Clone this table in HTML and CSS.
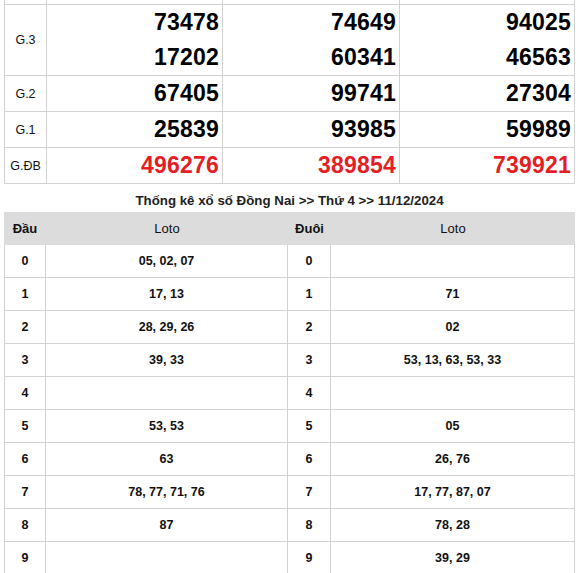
FILE: index.html
```html
<!DOCTYPE html>
<html lang="vi">
<head>
<meta charset="utf-8">
<title>XSDN 11/12/2024</title>
<link rel="stylesheet" href="styles.css">
</head>
<body>
<div class="page">
  <div class="prizes">
    <div class="cell lbl cut"></div><div class="cell cut"></div><div class="cell cut"></div><div class="cell cut"></div>

    <div class="cell lbl g3">G.3</div>
    <div class="cell num g3"><span>73478</span><span>17202</span></div>
    <div class="cell num g3"><span>74649</span><span>60341</span></div>
    <div class="cell num g3"><span>94025</span><span>46563</span></div>

    <div class="cell lbl row">G.2</div>
    <div class="cell num row"><span>67405</span></div>
    <div class="cell num row"><span>99741</span></div>
    <div class="cell num row"><span>27304</span></div>

    <div class="cell lbl row">G.1</div>
    <div class="cell num row"><span>25839</span></div>
    <div class="cell num row"><span>93985</span></div>
    <div class="cell num row"><span>59989</span></div>

    <div class="cell lbl row">G.ĐB</div>
    <div class="cell num row red"><span>496276</span></div>
    <div class="cell num row red"><span>389854</span></div>
    <div class="cell num row red"><span>739921</span></div>
  </div>

  <div class="title">Thống kê xổ số Đồng Nai &gt;&gt; Thứ 4 &gt;&gt; 11/12/2024</div>

  <div class="loto">
    <div class="hd b">Đầu</div><div class="hd">Loto</div><div class="hd b">Đuôi</div><div class="hd">Loto</div>

    <div class="c">0</div><div class="c">05, 02, 07</div><div class="c">0</div><div class="c"></div>
    <div class="c">1</div><div class="c">17, 13</div><div class="c">1</div><div class="c">71</div>
    <div class="c">2</div><div class="c">28, 29, 26</div><div class="c">2</div><div class="c">02</div>
    <div class="c">3</div><div class="c">39, 33</div><div class="c">3</div><div class="c">53, 13, 63, 53, 33</div>
    <div class="c">4</div><div class="c"></div><div class="c">4</div><div class="c"></div>
    <div class="c">5</div><div class="c">53, 53</div><div class="c">5</div><div class="c">05</div>
    <div class="c">6</div><div class="c">63</div><div class="c">6</div><div class="c">26, 76</div>
    <div class="c">7</div><div class="c">78, 77, 71, 76</div><div class="c">7</div><div class="c">17, 77, 87, 07</div>
    <div class="c">8</div><div class="c">87</div><div class="c">8</div><div class="c">78, 28</div>
    <div class="c">9</div><div class="c"></div><div class="c">9</div><div class="c">39, 29</div>
  </div>
</div>
</body>
</html>
```

FILE: styles.css
```css
* { box-sizing: border-box; }

html, body {
  margin: 0;
  padding: 0;
  background: #fff;
}

body {
  font-family: "Liberation Sans", Arial, sans-serif;
  color: #111;
}

.page {
  margin-left: 4px;
  width: 571px;
}

.prizes {
  display: grid;
  grid-template-columns: 42px 176px 177px 175px;
  border-left: 1px solid #d2d2d2;
}

.cell {
  border-right: 1px solid #d2d2d2;
  border-bottom: 1px solid #d2d2d2;
}

.cut { height: 5px; }
.g3 { height: 71px; }
.row { height: 36px; }

.lbl {
  display: flex;
  align-items: center;
  justify-content: center;
  font-size: 12.5px;
  color: #111;
}

.num {
  display: flex;
  flex-direction: column;
  justify-content: center;
  align-items: flex-end;
  padding-right: 3px;
  font-weight: bold;
  font-size: 23px;
  letter-spacing: 0.2px;
  color: #000;
}

.num span {
  display: block;
  height: 35px;
  line-height: 35px;
}

.red { color: #e31e25; }

.title {
  height: 28px;
  line-height: 23px;
  text-align: center;
  font-weight: bold;
  font-size: 13.3px;
  color: #222;
  padding-top: 5px;
}

.loto {
  display: grid;
  grid-template-columns: 42px 242px 43px 244px;
  font-size: 12.5px;
  font-weight: bold;
  color: #111;
}

.hd {
  height: 33px;
  background: #dcdcdc;
  display: flex;
  align-items: center;
  justify-content: center;
  font-weight: normal;
  font-size: 13px;
  color: #111;
}

.hd.b { font-weight: bold; }

.c {
  height: 33px;
  display: flex;
  align-items: center;
  justify-content: center;
  border-right: 1px solid #d2d2d2;
  border-bottom: 1px solid #d2d2d2;
}

.c:nth-child(4n+1) {
  border-left: 1px solid #d2d2d2;
}
```
